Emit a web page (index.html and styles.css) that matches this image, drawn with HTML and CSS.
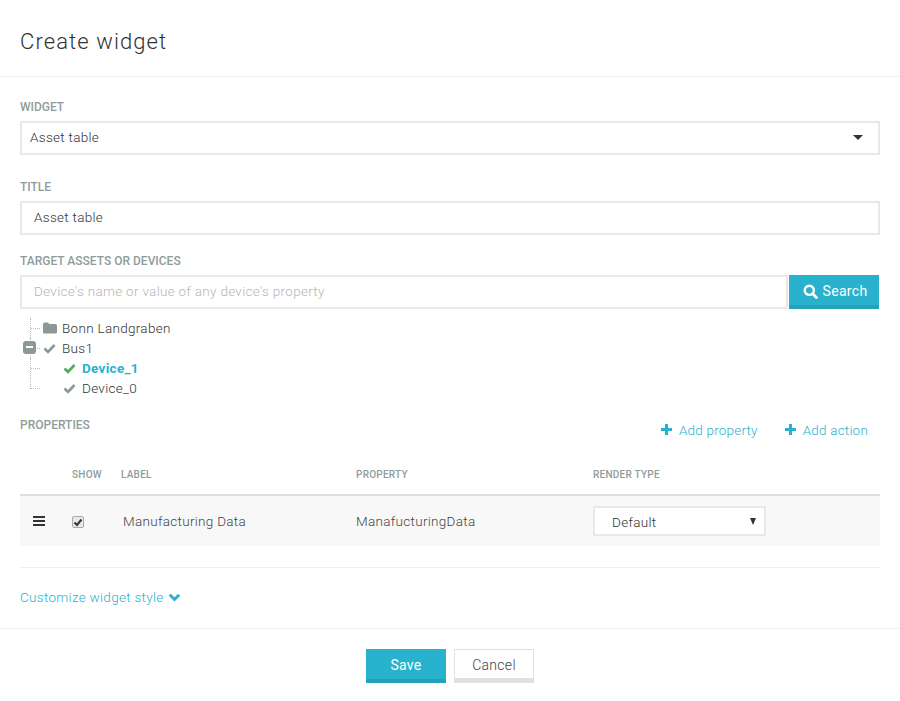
FILE: index.html
```html
<!DOCTYPE html>
<html lang="en">
<head>
    <meta charset="UTF-8">
    <meta name="viewport" content="width=device-width, initial-scale=1.0">
    <title>Create widget</title>
    <link rel="stylesheet" href="styles.css">
</head>
<body>
    <header class="modal-header">
        <h1>Create widget</h1>
    </header>
    <main class="modal-body">
        <div class="field">
            <label class="field-label">Widget</label>
            <div class="select-box">
                <span>Asset table</span>
                <span class="caret"></span>
            </div>
        </div>
        <div class="field">
            <label class="field-label">Title</label>
            <div class="text-box">Asset table</div>
        </div>
        <div class="field field-target">
            <label class="field-label">Target assets or devices</label>
            <div class="search-row">
                <div class="text-box placeholder">Device's name or value of any device's property</div>
                <button class="search-button">
                    <svg class="icon" width="15" height="15" viewBox="0 0 15 15"><circle cx="6.300" cy="6.300" r="4.600" fill="none" stroke="#fff" stroke-width="2.400"/><path d="M9.800 9.800L13.400 13.400" stroke="#fff" stroke-width="2.800" stroke-linecap="round"/></svg>
                    Search
                </button>
            </div>
        </div>

        <ul class="tree">
            <li class="tree-row">
                <span class="tree-line"></span>
                <svg class="tree-icon" width="14" height="12" viewBox="0 0 14 12"><path d="M0 2a1.500 1.500 0 0 1 1.500-1.500h3a1.500 1.500 0 0 1 1.500 1.500h6.500a1.500 1.500 0 0 1 1.500 1.500v6.500a1.500 1.500 0 0 1-1.500 1.500h-11a1.500 1.500 0 0 1-1.500-1.500z" fill="#8c9896"/></svg>
                <span>Bonn Landgraben</span>
            </li>
            <li class="tree-row">
                <span class="tree-line"></span>
                <span class="tree-toggle"></span>
                <svg class="tree-icon tree-check-root" width="13" height="11" viewBox="0 0 13 11"><path d="M1.500 5.500L5 9L11.500 2" fill="none" stroke="#8c9896" stroke-width="2.600"/></svg>
                <span>Bus1</span>
            </li>
            <li class="tree-row tree-child selected">
                <span class="tree-line"></span>
                <svg class="tree-icon" width="13" height="11" viewBox="0 0 13 11"><path d="M1.500 5.500L5 9L11.500 2" fill="none" stroke="#4caf50" stroke-width="2.600"/></svg>
                <span>Device_1</span>
            </li>
            <li class="tree-row tree-child">
                <span class="tree-line tree-line-last"></span>
                <svg class="tree-icon" width="13" height="11" viewBox="0 0 13 11"><path d="M1.500 5.500L5 9L11.500 2" fill="none" stroke="#8c9896" stroke-width="2.600"/></svg>
                <span>Device_0</span>
            </li>
        </ul>

        <div class="properties-head">
            <label class="field-label">Properties</label>
            <div class="properties-actions">
                <a class="action-link"><span class="plus"></span>Add property</a>
                <a class="action-link"><span class="plus"></span>Add action</a>
            </div>
        </div>

        <table class="properties-table">
            <thead>
                <tr>
                    <th class="col-drag"></th>
                    <th class="col-show">Show</th>
                    <th class="col-label">Label</th>
                    <th class="col-property">Property</th>
                    <th>Render type</th>
                </tr>
            </thead>
            <tbody>
                <tr>
                    <td class="cell-drag"><span class="bars"></span></td>
                    <td class="cell-show">
                        <span class="checkbox">
                            <svg width="10" height="9" viewBox="0 0 10 9"><path d="M1.500 4.500L4 7L8.500 1.500" fill="none" stroke="#333" stroke-width="2"/></svg>
                        </span>
                    </td>
                    <td class="cell-label">Manufacturing Data</td>
                    <td>ManafucturingData</td>
                    <td>
                        <div class="render-select">
                            <span>Default</span>
                            <span class="caret-small"></span>
                        </div>
                    </td>
                </tr>
            </tbody>
        </table>

        <div class="customize">
            <a class="customize-link">Customize widget style
                <svg width="13" height="9" viewBox="0 0 13 9"><path d="M1.800 1.800L6.500 6.500L11.200 1.800" fill="none" stroke="#29b2cd" stroke-width="3"/></svg>
            </a>
        </div>
    </main>
    <footer class="modal-footer">
        <button class="btn btn-save">Save</button>
        <button class="btn btn-cancel">Cancel</button>
    </footer>
</body>
</html>
```

FILE: styles.css
```css
body, html {
    margin: 0;
    padding: 0;
    background-color: #fff;
    font-family: Roboto, "Liberation Sans", sans-serif;
    font-size: 13.5px;
    font-weight: 300;
    letter-spacing: 0.3px;
    color: #333;
}

.modal-header {
    height: 76px;
    border-bottom: 1px solid #f0f0f0;
    padding-left: 20px;
    display: flex;
    align-items: center;
}

.modal-header h1 {
    margin: 6px 0 0;
    font-size: 22px;
    font-weight: 300;
    letter-spacing: 1.100px;
    color: #333;
}

.modal-body {
    padding: 0 20px;
}

.field {
    padding-top: 22px;
}

.field + .field {
    padding-top: 24px;
}

.field + .field-target {
    padding-top: 18px;
}

.field-label {
    display: block;
    height: 16px;
    line-height: 16px;
    margin-bottom: 6px;
    font-size: 12px;
    font-weight: 500;
    letter-spacing: 0;
    text-transform: uppercase;
    color: #8f9c9a;
}

.select-box,
.text-box {
    box-sizing: border-box;
    height: 34px;
    border: 2px solid #e8e8e8;
    background-color: #fff;
    display: flex;
    align-items: center;
    color: #333;
}

.select-box {
    justify-content: space-between;
    padding: 0 15px 2px 8px;
}

.text-box {
    padding: 0 12px 2px;
}

.caret {
    width: 0;
    height: 0;
    border-left: 5px solid transparent;
    border-right: 5px solid transparent;
    border-top: 5px solid #333;
}

.search-row {
    display: flex;
    padding-right: 1px;
}

.search-row .text-box {
    flex: 1;
    margin-right: 1px;
}

.search-row .placeholder {
    color: #b5b5b5;
}

.search-button {
    box-sizing: border-box;
    width: 90px;
    height: 34px;
    border: none;
    border-bottom: 4px solid #22a1b9;
    background-color: #29b2cd;
    color: #fff;
    font-family: inherit;
    font-size: 14px;
    font-weight: 400;
    letter-spacing: 0.3px;
    display: flex;
    align-items: center;
    justify-content: center;
    gap: 5px;
    padding: 2px 0 0 2px;
}

.tree {
    list-style: none;
    margin: 9px 0 0;
    padding: 0 0 0 2px;
}

.tree-row {
    position: relative;
    height: 20px;
    display: flex;
    align-items: center;
    padding-left: 21px;
    gap: 5px;
}

.tree-child {
    padding-left: 41px;
    gap: 6px;
}

.tree-child.selected {
    color: #29b2cd;
    font-weight: 700;
}

.tree-icon {
    flex: none;
}

.tree-check-root {
    margin-right: 1px;
}

.tree-line {
    position: absolute;
    left: 8px;
    top: 0;
    width: 10px;
    height: 100%;
    border-left: 1px dotted #bbb;
    background: linear-gradient(to right, #bbb 50%, transparent 50%) 0 10px / 2px 1px repeat-x;
}

.tree-line-last {
    height: 11px;
}

.tree-toggle {
    position: absolute;
    left: 1px;
    top: 3px;
    width: 13px;
    height: 13px;
    border-radius: 3px;
    background-color: #8c9896;
}

.tree-toggle::after {
    content: "";
    position: absolute;
    left: 3px;
    top: 5px;
    width: 7px;
    height: 2px;
    background-color: #fff;
}

.properties-head {
    display: flex;
    justify-content: space-between;
    margin-top: 19px;
}

.properties-actions {
    display: flex;
    gap: 27px;
    padding: 4px 12px 0 0;
    margin-bottom: 1px;
}

.action-link {
    color: #29b2cd;
    display: flex;
    align-items: center;
    gap: 7px;
    letter-spacing: 0.200px;
}

.plus {
    width: 11px;
    height: 11px;
    background:
        linear-gradient(#29b2cd, #29b2cd) center / 100% 3px no-repeat,
        linear-gradient(#29b2cd, #29b2cd) center / 3px 100% no-repeat;
}

.properties-table {
    width: 100%;
    border-collapse: collapse;
    margin-top: 15px;
}

.properties-table th {
    height: 40px;
    padding: 0;
    text-align: left;
    font-size: 10px;
    font-weight: 500;
    letter-spacing: 0.250px;
    text-transform: uppercase;
    color: #8f9c9a;
    border-bottom: 2px solid #dbe0df;
}

.col-drag {
    width: 52px;
}

.col-show {
    width: 49px;
}

.col-label {
    width: 235px;
}

.col-property {
    width: 237px;
}

.properties-table td {
    height: 50px;
    padding: 0;
    background-color: #f8f8f8;
    color: #444;
}

.properties-table .cell-drag {
    width: 39px;
    padding-left: 13px;
}

.bars {
    display: block;
    width: 12px;
    height: 10px;
    border-top: 2px solid #333;
    border-bottom: 2px solid #333;
    position: relative;
    box-sizing: border-box;
}

.bars::after {
    content: "";
    position: absolute;
    left: 0;
    right: 0;
    top: 2px;
    height: 2px;
    background-color: #333;
}

.checkbox {
    box-sizing: border-box;
    display: flex;
    align-items: center;
    justify-content: center;
    width: 12px;
    height: 12px;
    border: 1px solid #aaa;
    border-radius: 2px;
    background-color: #e9e9e9;
    margin-top: 2px;
}

.properties-table .cell-label {
    padding-left: 2px;
}

.render-select {
    box-sizing: border-box;
    width: 173px;
    height: 30px;
    border: 2px solid #e8e8e8;
    background-color: #fff;
    color: #333;
    display: flex;
    align-items: center;
    justify-content: space-between;
    padding: 1px 8px 0 17px;
}

.caret-small {
    width: 0;
    height: 0;
    border-left: 3.500px solid transparent;
    border-right: 3.500px solid transparent;
    border-top: 7px solid #333;
}

.customize {
    box-sizing: border-box;
    margin-top: 21px;
    border-top: 1px solid #f0f0f0;
    padding-top: 21px;
    height: 61px;
}

.customize-link {
    color: #29b2cd;
    display: flex;
    align-items: center;
    gap: 4px;
}

.modal-footer {
    border-top: 1px solid #f0f0f0;
    padding-top: 20px;
    display: flex;
    justify-content: center;
    gap: 8px;
}

.btn {
    box-sizing: border-box;
    width: 80px;
    height: 34px;
    font-family: inherit;
    font-size: 14px;
    font-weight: 400;
    letter-spacing: 0.3px;
    padding: 1px 0 0;
}

.btn-save {
    border: none;
    border-bottom: 4px solid #22a1b9;
    background-color: #29b2cd;
    color: #fff;
}

.btn-cancel {
    border: 1px solid #e0e0e0;
    border-bottom: 5px solid #e0e0e0;
    background-color: #fff;
    font-weight: 300;
    color: #444;
}
```
